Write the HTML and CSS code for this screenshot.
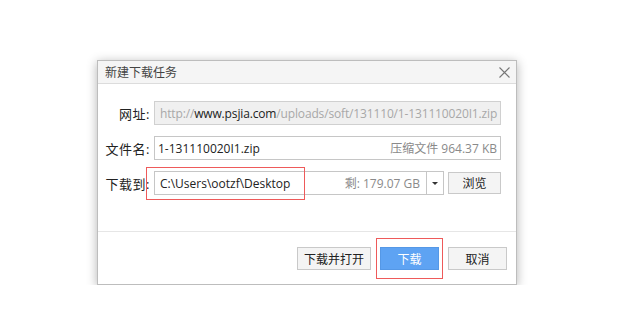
FILE: index.html
```html
<!DOCTYPE html>
<html lang="zh-CN">
<head>
    <meta charset="UTF-8">
    <title>新建下载任务</title>
    <link rel="stylesheet" href="styles.css">
</head>
<body>
    <div class="dialog">
        <div class="titlebar">
            <span class="title">新建下载任务</span>
            <svg class="close" width="11" height="11" viewBox="0 0 11 11">
                <path d="M0.5 0.5 L10.5 10.5 M10.5 0.5 L0.5 10.5" stroke="#777" stroke-width="1.1" fill="none"/>
            </svg>
        </div>
        <div class="content">
            <div class="row">
                <label class="label">网址:</label>
                <div class="field disabled">
                    <span class="url"><span class="dim">http://</span>www.psjia.com<span class="dim">/uploads/soft/131110/1-131110020I1.zip</span></span>
                </div>
            </div>
            <div class="row">
                <label class="label">文件名:</label>
                <div class="field">
                    <span class="value">1-131110020I1.zip</span>
                    <span class="hint">压缩文件 964.37 KB</span>
                </div>
            </div>
            <div class="row">
                <label class="label">下载到:</label>
                <div class="field combo">
                    <span class="value">C:\Users\ootzf\Desktop</span>
                    <span class="hint">剩: 179.07 GB</span>
                    <span class="drop"><span class="arrow"></span></span>
                    <span class="mark mark-path"></span>
                </div>
                <button class="btn browse">浏览</button>
            </div>
        </div>
        <div class="footer">
            <button class="btn">下载并打开</button>
            <button class="btn primary">下载<span class="mark mark-btn"></span></button>
            <button class="btn">取消</button>
        </div>
    </div>
</body>
</html>
```

FILE: styles.css
```css
body {
    margin: 0;
    padding: 60px 0 0 97px;
    background-color: #fff;
    font-family: 'Open Sans', 'Noto Sans CJK SC', sans-serif;
    font-size: 12px;
    color: #222;
}
.dialog {
    width: 418px;
    height: 223px;
    border: 1px solid #bdbdbd;
    background-color: #fff;
    box-shadow: 0 2px 10px rgba(0, 0, 0, 0.3);
    display: flex;
    flex-direction: column;
}
.titlebar {
    height: 22px;
    background-color: #f5f5f5;
    border-bottom: 1px solid #dcdcdc;
    display: flex;
    align-items: center;
    justify-content: space-between;
    padding: 0 6px 0 7px;
}
.title {
    font-size: 12px;
    color: #444;
}
.close {
    display: block;
}
.content {
    padding: 17px 15px 0 0;
    display: flex;
    flex-direction: column;
    gap: 11px;
    height: 130px;
    border-bottom: 1px solid #e6e6e6;
}
.row {
    display: flex;
    align-items: center;
    height: 24px;
}
.label {
    width: 52px;
    text-align: right;
    padding-right: 4px;
    font-size: 13px;
    letter-spacing: 0.5px;
    color: #222;
}
.field {
    flex: 1;
    height: 22px;
    border: 1px solid #c6c6c6;
    display: flex;
    align-items: center;
    justify-content: space-between;
    padding: 0 3px;
    white-space: nowrap;
    overflow: hidden;
    font-size: 12px;
    position: relative;
}
.field.disabled {
    background-color: #f0f0f0;
    border-color: #d0d0d0;
    padding-left: 5px;
}
.url {
    color: #222;
    font-size: 12px;
    letter-spacing: -0.15px;
}
.dim {
    color: #a8a8a8;
}
.hint {
    color: #8a8a8a;
    font-size: 12px;
}
.combo {
    overflow: visible;
    padding-right: 0;
    margin-right: 4px;
    padding-left: 5px;
}
.combo .hint {
    margin-left: auto;
    margin-right: 6px;
}
.drop {
    width: 16px;
    height: 22px;
    border-left: 1px solid #c6c6c6;
    display: flex;
    align-items: center;
    justify-content: center;
}
.arrow {
    width: 0;
    height: 0;
    border-left: 3px solid transparent;
    border-right: 3px solid transparent;
    border-top: 3px solid #333;
}
.btn {
    font-family: 'Open Sans', 'Noto Sans CJK SC', sans-serif;
    font-size: 12px;
    color: #222;
    background-color: #f4f4f4;
    border: 1px solid #c9c9c9;
    height: 23px;
    padding: 0;
    position: relative;
}
.browse {
    width: 53px;
    height: 22px;
}
.footer {
    flex: 1;
    display: flex;
    justify-content: flex-end;
    align-items: flex-start;
    gap: 9px;
    padding: 15px 9px 0 0;
}
.footer .btn:first-child {
    width: 74px;
}
.footer .btn {
    width: 59px;
}
.btn.primary {
    background-color: #5ea3f3;
    border-color: #5598e6;
    color: #fff;
}
.mark {
    position: absolute;
    border: 1px solid #ee5a5a;
    pointer-events: none;
}
.mark-path {
    left: -9px;
    top: -5px;
    width: 157px;
    height: 31px;
}
.mark-btn {
    left: -5px;
    top: -10px;
    width: 65px;
    height: 39px;
}
```
